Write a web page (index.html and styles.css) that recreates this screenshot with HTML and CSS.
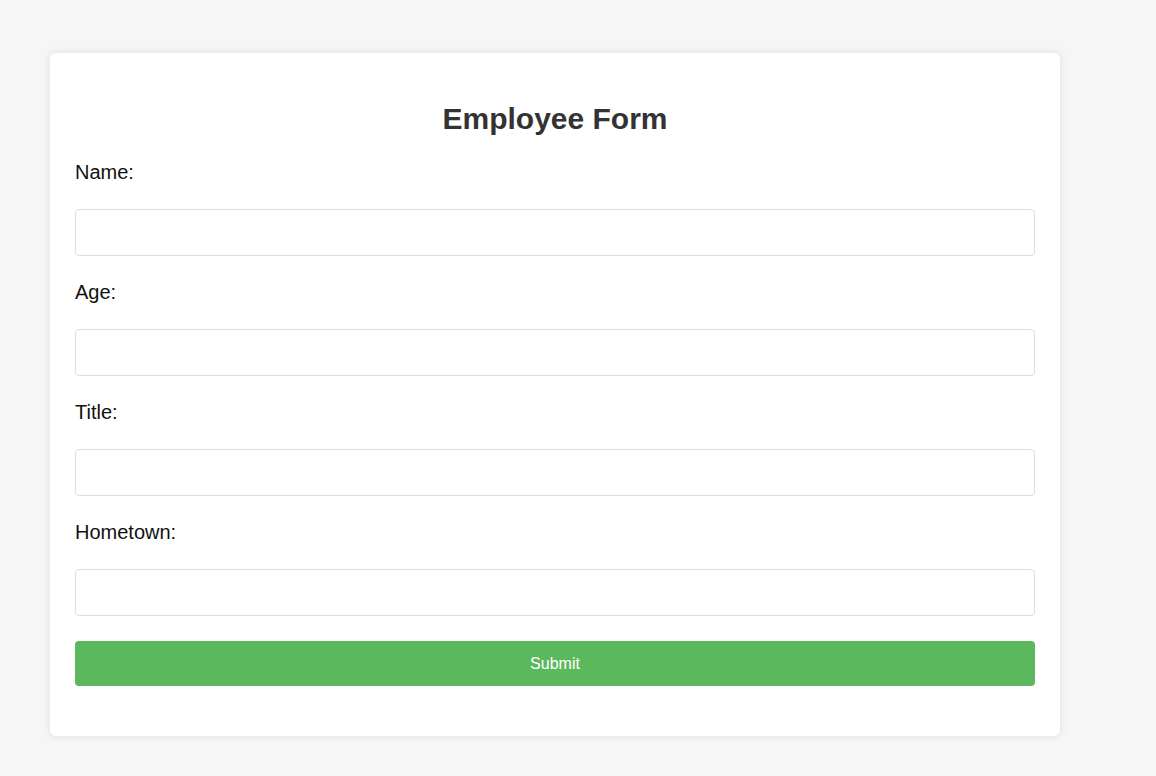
FILE: index.html
```html
<!DOCTYPE html>
<html lang="en">
<head>
<meta charset="utf-8">
<title>Employee Form</title>
<link rel="stylesheet" href="styles.css">
</head>
<body>
<div class="card">
  <h2 class="title">Employee Form</h2>
  <form class="form">
    <div class="field">
      <label class="label" for="name">Name:</label>
      <input class="input" id="name" type="text">
    </div>
    <div class="field">
      <label class="label" for="age">Age:</label>
      <input class="input" id="age" type="text">
    </div>
    <div class="field">
      <label class="label" for="title">Title:</label>
      <input class="input" id="title" type="text">
    </div>
    <div class="field">
      <label class="label" for="hometown">Hometown:</label>
      <input class="input" id="hometown" type="text">
    </div>
    <button class="submit" type="button">Submit</button>
  </form>
</div>
</body>
</html>
```

FILE: styles.css
```css
html, body {
  margin: 0;
  padding: 0;
}
body {
  background: #f6f6f6;
  font-family: "Liberation Sans", Arial, sans-serif;
  padding: 53px 0 40px 50px;
}
.card {
  box-sizing: border-box;
  width: 1010px;
  background: #ffffff;
  border-radius: 6px;
  box-shadow: 0 0 8px rgba(0, 0, 0, 0.1);
  padding: 25px 25px 50px;
}
.title {
  margin: 24px 0 25px;
  text-align: center;
  font-size: 30px;
  font-weight: bold;
  color: #333333;
  line-height: 34px;
}
.form {
  display: flex;
  flex-direction: column;
}
.field {
  display: flex;
  flex-direction: column;
  gap: 25px;
  margin-bottom: 25px;
}
.label {
  font-size: 20px;
  line-height: 23px;
  color: #111111;
}
.input {
  box-sizing: border-box;
  height: 47px;
  width: 100%;
  border: 1px solid #dddddd;
  border-radius: 4px;
  padding: 10px 12px;
  font-size: 16px;
  font-family: "Liberation Sans", Arial, sans-serif;
  background: #ffffff;
  outline: none;
}
.submit {
  height: 45px;
  width: 100%;
  border: none;
  border-radius: 4px;
  background: #5cb85c;
  color: #ffffff;
  font-size: 16px;
  font-family: "Liberation Sans", Arial, sans-serif;
  cursor: pointer;
}
```
